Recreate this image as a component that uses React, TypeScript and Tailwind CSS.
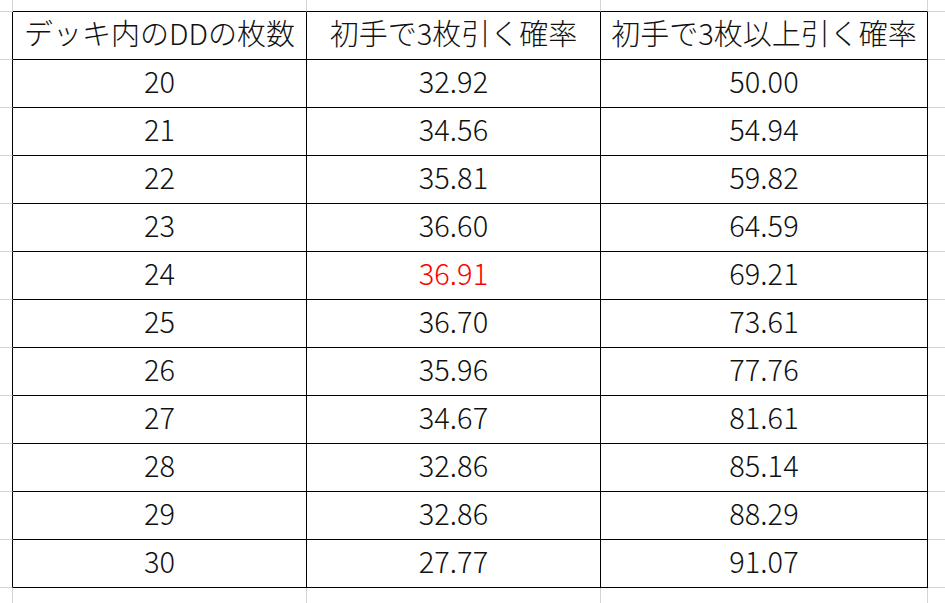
import React from "react";

const header = ["デッキ内のDDの枚数", "初手で3枚引く確率", "初手で3枚以上引く確率"];
const rows: [string, string, string][] = [
  ["20", "32.92", "50.00"],
  ["21", "34.56", "54.94"],
  ["22", "35.81", "59.82"],
  ["23", "36.60", "64.59"],
  ["24", "36.91", "69.21"],
  ["25", "36.70", "73.61"],
  ["26", "35.96", "77.76"],
  ["27", "34.67", "81.61"],
  ["28", "32.86", "85.14"],
  ["29", "32.86", "88.29"],
  ["30", "27.77", "91.07"],
];

const font = { fontFamily: '"Noto Sans CJK JP", "Noto Sans", sans-serif' };

export default function App() {
  const cells: React.ReactNode[] = [];
  const allRows: (string[] | null)[] = [null, header, ...rows, null];
  allRows.forEach((r, ri) => {
    for (let ci = 0; ci < 5; ci++) {
      const inTableRow = ri >= 1 && ri <= 12;
      const inTableCol = ci >= 1 && ci <= 3;
      const isTop = ri === 0;
      const rightBlack = inTableRow && ci <= 3;
      const bottomBlack = inTableCol && ri <= 12;
      const isLastRow = ri === 13;
      const isLastCol = ci === 4;
      const hasText = !!r && inTableCol && !isTop;
      const cls = [
        "flex items-center justify-center",
        hasText ? "pb-[8px]" : "",
        isLastCol ? "" : "border-r",
        isLastRow ? "" : "border-b",
        rightBlack ? "border-r-black" : "border-r-[#d4d4d4]",
        bottomBlack ? "border-b-black" : "border-b-[#d4d4d4]",
      ].join(" ");
      let content: React.ReactNode = null;
      if (hasText && r) {
        const text = r[ci - 1];
        const red = ri === 6 && ci === 2;
        content = (
          <span
            className={
              "text-[29px] font-light leading-[36px] whitespace-nowrap " +
              (red ? "text-[#ff0000]" : "text-[#111]")
            }
          >
            {text}
          </span>
        );
      }
      cells.push(
        <div key={ri + "-" + ci} className={cls}>
          {content}
        </div>
      );
    }
  });

  return (
    <div
      className="w-[945px] h-[603px] bg-white overflow-hidden grid grid-cols-[13px_294px_294px_327px_1fr] grid-rows-[12px_repeat(12,48px)_1fr]"
      style={font}
    >
      {cells}
    </div>
  );
}
